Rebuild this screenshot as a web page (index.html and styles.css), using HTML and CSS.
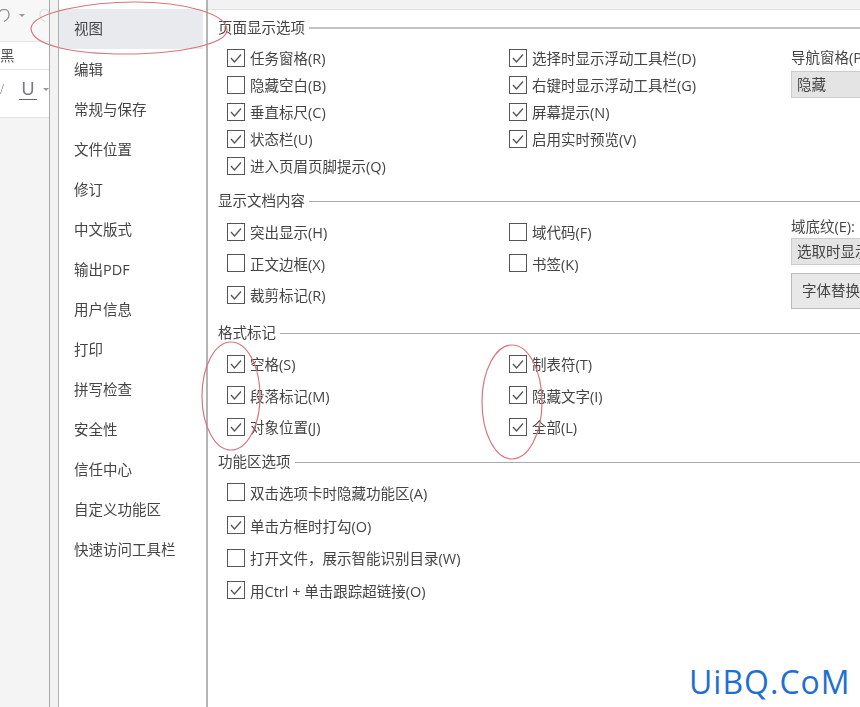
FILE: index.html
```html
<!doctype html>
<html>
<head>
    <meta charset="utf-8">
    <title>选项</title>
    <link rel="stylesheet" href="styles.css">
</head>
<body>
<div class="page">
    <div class="strip">
        <div class="undo-row">
            <svg class="undo" width="14" height="16" viewBox="0 0 14 16"><path d="M0 5 Q1 1.5 5 1.5 Q10 1.5 10 6.5 Q10 11 5 13.5" fill="none" stroke="#888" stroke-width="1.2"/></svg>
            <span class="arrow"></span>
            <svg class="redo" width="12" height="16" viewBox="0 0 12 16"><path d="M10 5 Q9 1.5 6 1.5 Q1 1.5 1 6.5 Q1 11 6 13.5" fill="none" stroke="#ddd" stroke-width="1.2"/></svg>
        </div>
        <div class="font-row">黑</div>
        <div class="format-row">
            <span class="italic">/</span>
            <span class="under">U</span>
            <span class="arrow"></span>
        </div>
    </div>
    <div class="gutter"></div>
    <ul class="nav">
        <li class="active">视图</li>
        <li>编辑</li>
        <li>常规与保存</li>
        <li>文件位置</li>
        <li>修订</li>
        <li>中文版式</li>
        <li>输出PDF</li>
        <li>用户信息</li>
        <li>打印</li>
        <li>拼写检查</li>
        <li>安全性</li>
        <li>信任中心</li>
        <li>自定义功能区</li>
        <li>快速访问工具栏</li>
    </ul>
    <div class="main">
        <section class="group first">
            <h2><span>页面显示选项</span></h2>
            <div class="cols rows-a">
                <div class="opt on">任务窗格(R)</div>
                <div class="opt on">选择时显示浮动工具栏(D)</div>
                <div class="opt">隐藏空白(B)</div>
                <div class="opt on">右键时显示浮动工具栏(G)</div>
                <div class="opt on">垂直标尺(C)</div>
                <div class="opt on">屏幕提示(N)</div>
                <div class="opt on">状态栏(U)</div>
                <div class="opt on">启用实时预览(V)</div>
                <div class="opt on">进入页眉页脚提示(Q)</div>
            </div>
            <div class="side side-a">
                <label>导航窗格(P):</label>
                <div class="select">隐藏</div>
            </div>
        </section>
        <section class="group second">
            <h2><span>显示文档内容</span></h2>
            <div class="cols rows-b">
                <div class="opt on">突出显示(H)</div>
                <div class="opt">域代码(F)</div>
                <div class="opt">正文边框(X)</div>
                <div class="opt">书签(K)</div>
                <div class="opt on">裁剪标记(R)</div>
            </div>
            <div class="side side-b">
                <label>域底纹(E):</label>
                <div class="select">选取时显示</div>
                <div class="button">字体替换...</div>
            </div>
        </section>
        <section class="group third">
            <h2><span>格式标记</span></h2>
            <div class="cols rows-b">
                <div class="opt on">空格(S)</div>
                <div class="opt on">制表符(T)</div>
                <div class="opt on">段落标记(M)</div>
                <div class="opt on">隐藏文字(I)</div>
                <div class="opt on">对象位置(J)</div>
                <div class="opt on">全部(L)</div>
            </div>
        </section>
        <section class="group fourth">
            <h2><span>功能区选项</span></h2>
            <div class="cols rows-c">
                <div class="opt wide">双击选项卡时隐藏功能区(A)</div>
                <div class="opt wide on">单击方框时打勾(O)</div>
                <div class="opt wide">打开文件，展示智能识别目录(W)</div>
                <div class="opt wide on">用Ctrl + 单击跟踪超链接(O)</div>
            </div>
        </section>
    </div>
</div>

<svg class="marks" width="860" height="707" viewBox="0 0 860 707">
    <path d="M31 28 C33 12 90 2 135 2 C185 2 227 14 227 30 C227 44 180 54 125 54 C75 54 31 46 31 28 Z"/>
    <ellipse cx="231" cy="396" rx="29" ry="54"/>
    <ellipse cx="512" cy="402" rx="30" ry="57"/>
</svg>
<div class="watermark">UiBQ.CoM</div>
</body>
</html>
```
FILE: styles.css
```css
* {
    box-sizing: border-box;
}
html, body {
    margin: 0;
    padding: 0;
    background: #fff;
}
body {
    width: 860px;
    height: 707px;
    overflow: hidden;
    position: relative;
    font-family: "Open Sans", "Noto Sans CJK SC", sans-serif;
    font-size: 14.5px;
    color: #444;
}
.page {
    display: flex;
    height: 707px;
    filter: blur(0.4px);
}

/* word window behind the dialog */
.strip {
    width: 50px;
    flex: none;
    background: #f4f4f4;
    border-right: 1px solid #a8a8a8;
}
.undo-row {
    height: 42px;
    background: #f7f7f7;
    display: flex;
    align-items: center;
    gap: 6px;
    padding-bottom: 10px;
    border-bottom: 1px solid #e6e6e6;
    overflow: hidden;
}
.undo {
    margin-left: -1px;
    flex: none;
}
.redo {
    margin-left: 8px;
    flex: none;
}
.arrow {
    width: 0;
    height: 0;
    flex: none;
    border-left: 3px solid transparent;
    border-right: 3px solid transparent;
    border-top: 3px solid #999;
}
.font-row {
    height: 28px;
    line-height: 28px;
    background: #fff;
    color: #555;
    border-bottom: 1px solid #e6e6e6;
}
.format-row {
    height: 48px;
    background: #fff;
    border-bottom: 1px solid #e4e4e4;
    display: flex;
    align-items: center;
    padding-bottom: 8px;
    color: #778;
}
.italic {
    width: 19px;
    font-family: "Liberation Serif", serif;
    color: #888;
}
.under {
    width: 18px;
    font-family: "Liberation Sans", sans-serif;
    font-size: 18px;
    line-height: 20px;
    text-align: center;
    border-bottom: 1px solid #667;
    margin-right: 6px;
}
.gutter {
    width: 9px;
    flex: none;
    background: #f2f2f2;
    border-right: 1px solid #b0b0b0;
}

/* left menu */
.nav {
    list-style: none;
    width: 149px;
    flex: none;
    margin: 0;
    padding: 9px 3px 0 0;
    background: #fff;
    border-right: 2px solid #b4b4b4;
}
.nav li {
    height: 40px;
    line-height: 42px;
    padding-left: 15px;
    color: #444;
}
.nav li.active {
    line-height: 40px;
    background: #e8eaee;
}

/* right pane */
.main {
    flex: 1;
    min-width: 0;
    border-top: 9px solid #f2f2f2;
    box-shadow: inset 0 1px 0 #e2e2e2;
    padding-left: 10px;
    overflow: hidden;
}
.group {
    position: relative;
}
.group h2 {
    margin: 0;
    font-size: 14.5px;
    font-weight: normal;
    height: 20px;
    line-height: 20px;
    display: flex;
    align-items: center;
    gap: 4px;
    white-space: nowrap;
}
.group h2::after {
    content: "";
    flex: 1;
    border-top: 1px solid #aaa;
}
.first h2::after {
    border-top: 2px solid #c4c4c4;
}
.first {
    padding-top: 9px;
    height: 182px;
}
.second {
    height: 132px;
}
.third {
    height: 129px;
}
.cols {
    display: grid;
    grid-template-columns: 282px 282px;
    padding-left: 9px;
}
.rows-a {
    margin-top: 6px;
    grid-auto-rows: 27px;
}
.rows-b {
    margin-top: 5px;
    grid-auto-rows: 31.5px;
}
.rows-c {
    margin-top: 4px;
    grid-auto-rows: 32.7px;
}
.opt {
    display: flex;
    align-items: center;
    gap: 5px;
    white-space: nowrap;
}
.opt::before {
    content: "";
    width: 16px;
    height: 16px;
    flex: none;
    border: 1px solid #555;
    background: #fff;
}
.opt.on::before {
    background: url("data:image/svg+xml,%3Csvg xmlns='http://www.w3.org/2000/svg' width='14' height='14'%3E%3Cpath d='M2 7 L5.5 11 L12 3.5' fill='none' stroke='%23555' stroke-width='1.3'/%3E%3C/svg%3E") center no-repeat #fff;
}
.opt.wide {
    grid-column: 1 / 3;
}
.side {
    position: absolute;
    left: 573px;
    width: 90px;
}
.side label {
    display: block;
    white-space: nowrap;
    line-height: 20px;
}
.side-a {
    top: 39px;
}
.side-b {
    top: 26px;
}
.select {
    height: 27px;
    line-height: 26px;
    padding-left: 5px;
    margin-top: 3px;
    background: #e4e4e4;
    border: 1px solid #ccc;
    white-space: nowrap;
}
.side-b .select {
    margin-top: 1px;
}
.button {
    height: 36px;
    line-height: 34px;
    padding-left: 10px;
    margin-top: 8px;
    background: #e8e8e8;
    border: 1px solid #bbb;
    white-space: nowrap;
}

/* hand drawn marks on top of the screenshot */
.marks {
    position: absolute;
    left: 0;
    top: 0;
    pointer-events: none;
}
.marks ellipse, .marks path {
    fill: none;
    stroke: #d9747c;
    stroke-width: 1.2;
}
.watermark {
    position: absolute;
    left: 689px;
    top: 658px;
    font-family: "Open Sans", sans-serif;
    font-size: 32px;
    line-height: 48px;
    letter-spacing: 1px;
    color: #1f6fd0;
}
```
